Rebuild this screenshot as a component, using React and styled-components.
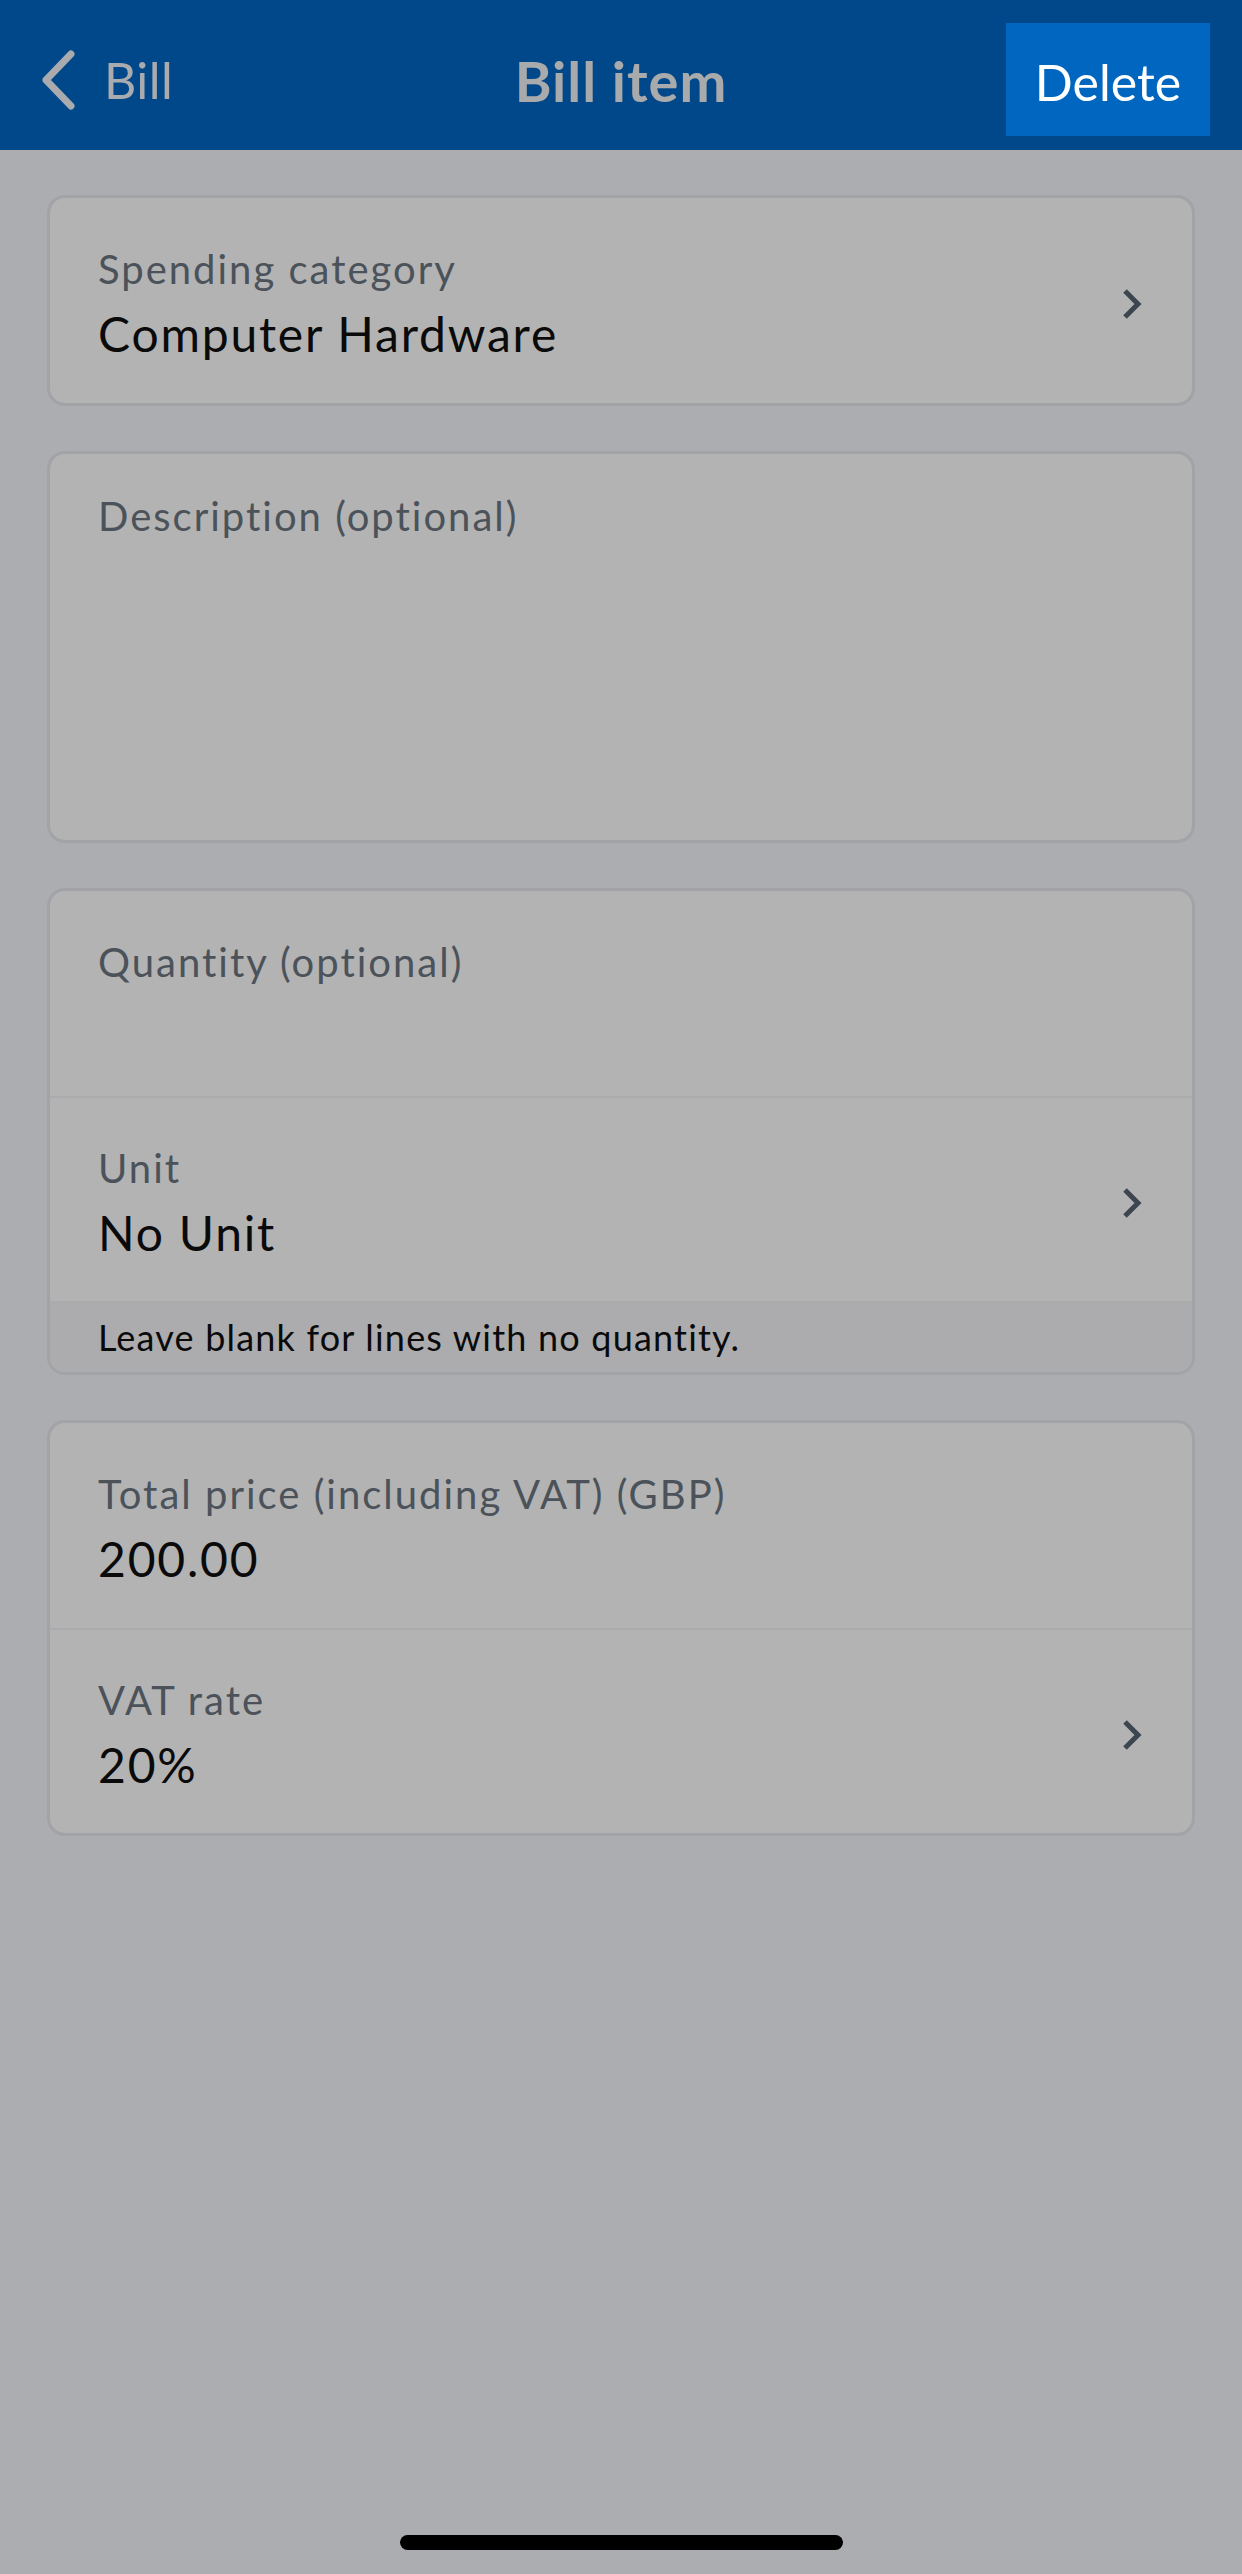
import React from "react";
import styled, { createGlobalStyle } from "styled-components";

const GlobalStyle = createGlobalStyle`
  html, body {
    margin: 0;
    padding: 0;
    background: #acadb1;
    font-family: Lato, "Noto Sans", sans-serif;
  }
  * {
    box-sizing: border-box;
  }
`;

export const Screen = styled.div`
  min-height: 100vh;
  display: flex;
  flex-direction: column;
  background-color: #acadb1;
`;

export const NavBar = styled.header`
  position: relative;
  height: 150px;
  display: flex;
  align-items: center;
  justify-content: space-between;
  padding: 10px 32px 0 38px;
  background-color: #00488a;
`;

export const BackLink = styled.div`
  display: flex;
  align-items: center;
  gap: 26px;
  font-size: 50px;
  letter-spacing: 0.5px;
  color: #a9abae;
`;

export const NavTitle = styled.h1`
  position: absolute;
  left: 0;
  right: 0;
  margin: 0;
  text-align: center;
  font-size: 56px;
  font-weight: 700;
  letter-spacing: 1px;
  color: #a9aaac;
  pointer-events: none;
`;

export const DeleteButton = styled.button`
  width: 204px;
  height: 113px;
  margin-top: -2px;
  border: none;
  padding: 6px 0 0;
  background-color: #0066bf;
  color: #ffffff;
  font-family: inherit;
  font-size: 50px;
`;

export const Content = styled.main`
  display: flex;
  flex-direction: column;
  gap: 45px;
  padding: 45px 47px;
`;

export const Card = styled.section`
  border: 3px solid #a2a3a7;
  border-radius: 18px;
  background-color: #b3b3b3;
  overflow: hidden;
`;

export const Row = styled.div`
  display: flex;
  align-items: center;
  min-height: ${(props) => props.height || 205}px;
  padding: 6px 48px 0 48px;
  border-top: ${(props) => (props.divided ? "2px solid #aaabad" : "none")};
`;

export const TextArea = styled.div`
  height: 386px;
  padding: 38px 48px;
`;

export const Field = styled.div`
  flex: 1;
  display: flex;
  flex-direction: column;
  gap: 12px;
`;

export const Label = styled.div`
  font-size: 40px;
  line-height: 48px;
  letter-spacing: 2px;
  color: #4b525a;
`;

export const Value = styled.div`
  font-size: 48px;
  line-height: 58px;
  min-height: 58px;
  letter-spacing: 1.8px;
  color: #0a0a0a;
`;

export const Hint = styled.div`
  height: 71px;
  display: flex;
  align-items: center;
  padding: 0 48px;
  background-color: #acacae;
  font-size: 36px;
  letter-spacing: 1.2px;
  color: #0a0a0a;
`;

export const HomeIndicator = styled.div`
  margin: auto auto 24px;
  width: 443px;
  height: 15px;
  border-radius: 8px;
  background-color: #000000;
`;

const Chevron = () => (
  <svg width="24" height="34" viewBox="0 0 24 34">
    <path d="M5 4 L18 17 L5 30" fill="none" stroke="#3d4650" strokeWidth="5" />
  </svg>
);

const BackChevron = () => (
  <svg width="40" height="62" viewBox="0 0 40 62">
    <path
      d="M33 5 L8 31 L33 57"
      fill="none"
      stroke="#a9abae"
      strokeWidth="7"
      strokeLinecap="round"
      strokeLinejoin="round"
    />
  </svg>
);

const FieldRow = ({ label, value, arrow, divided }) => (
  <Row divided={divided}>
    <Field>
      <Label>{label}</Label>
      <Value>{value}</Value>
    </Field>
    {arrow && <Chevron />}
  </Row>
);

export default function App() {
  return (
    <Screen>
      <GlobalStyle />
      <NavBar>
        <BackLink>
          <BackChevron />
          <span>Bill</span>
        </BackLink>
        <NavTitle>Bill item</NavTitle>
        <DeleteButton>Delete</DeleteButton>
      </NavBar>

      <Content>
        <Card>
          <FieldRow label="Spending category" value="Computer Hardware" arrow />
        </Card>

        <Card>
          <TextArea>
            <Label>Description (optional)</Label>
          </TextArea>
        </Card>

        <Card>
          <FieldRow label="Quantity (optional)" value="" />
          <FieldRow label="Unit" value="No Unit" arrow divided />
          <Hint>Leave blank for lines with no quantity.</Hint>
        </Card>

        <Card>
          <FieldRow label="Total price (including VAT) (GBP)" value="200.00" />
          <FieldRow label="VAT rate" value="20%" arrow divided />
        </Card>
      </Content>

      <HomeIndicator />
    </Screen>
  );
}
